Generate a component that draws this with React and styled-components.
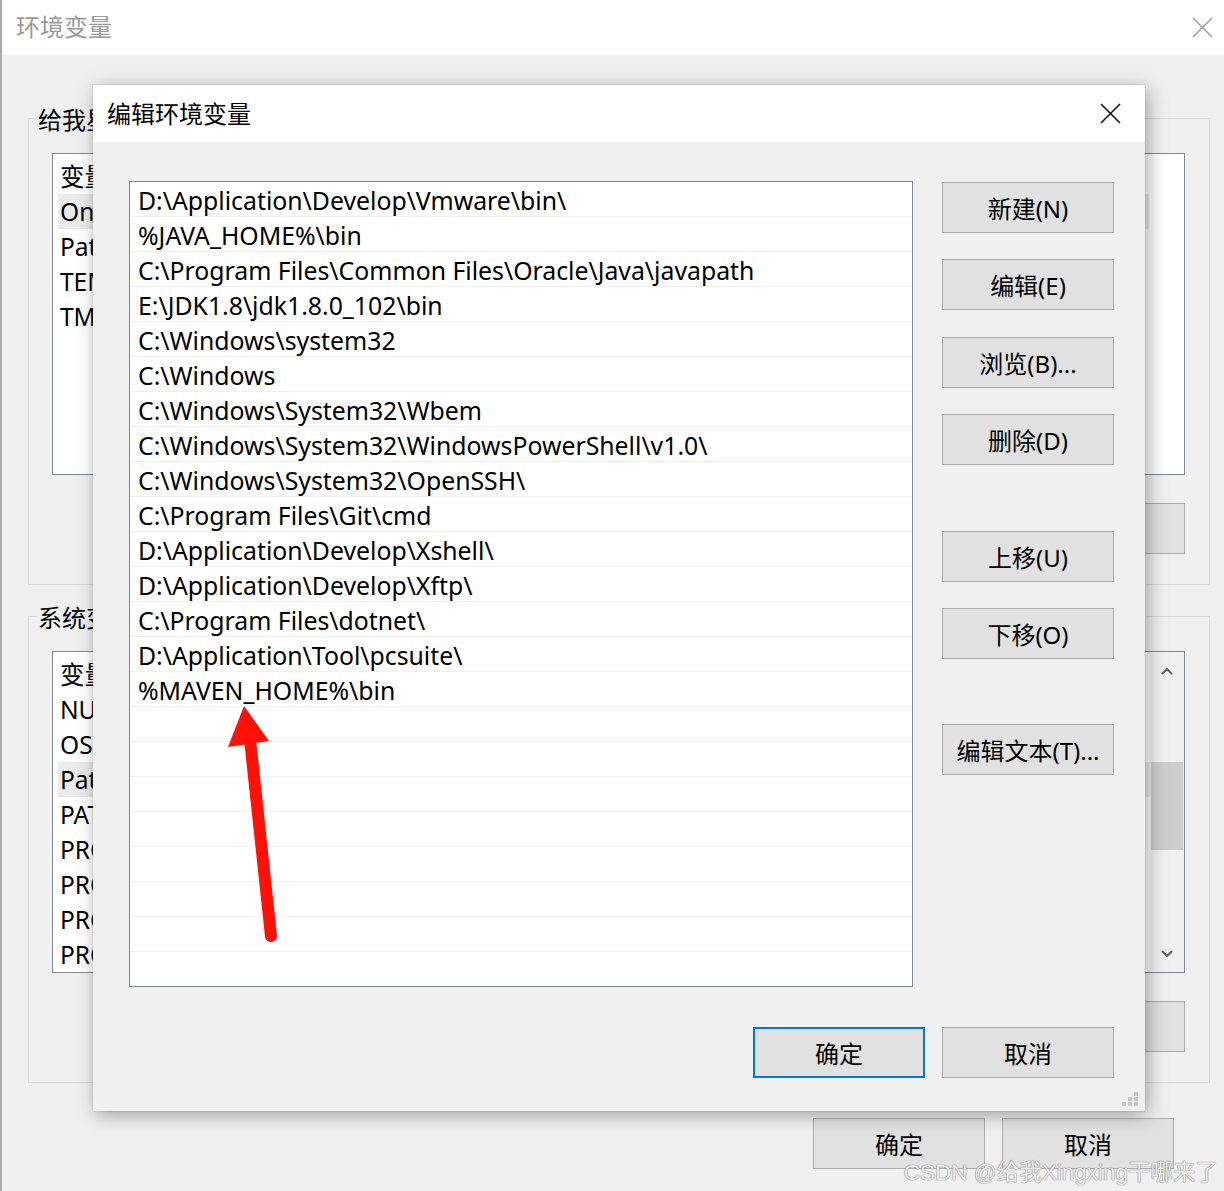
import React from 'react';
import styled, { createGlobalStyle, css } from 'styled-components';

const FONT = `"Noto Sans", "Noto Sans CJK SC", sans-serif`;

const GlobalStyle = createGlobalStyle`
  html, body { margin: 0; padding: 0; background: #f0f0f0; }
  body { font-family: ${FONT}; overflow: hidden; }
  * { box-sizing: border-box; }
`;

const Screen = styled.div`
  position: relative;
  width: 1224px;
  height: 1191px;
  overflow: hidden;
  font-family: ${FONT};
  color: #000;
`;

/* ---------- background window ---------- */
const Window = styled.div`
  width: 100%;
  height: 100%;
  background: #f0f0f0;
  border-left: 2px solid #acacac;
  display: flex;
  flex-direction: column;
`;

const TitleBar = styled.div`
  flex-shrink: 0;
  height: ${p => p.$h}px;
  background: #fff;
  display: flex;
  align-items: center;
  justify-content: space-between;
  padding: 0 ${p => p.$pr}px 0 14px;
`;

const TitleText = styled.div`
  font-size: 24px;
  line-height: 30px;
  margin-top: ${p => p.$mt || 0}px;
  color: ${p => (p.$inactive ? '#9a9a9a' : '#000')};
`;

const WinBody = styled.div`
  flex: 1;
  display: flex;
  flex-direction: column;
  padding: 63px 14px 0 26px;
`;

const Group = styled.div`
  border: 1px solid #dcdcdc;
  padding: 0 24px 30px 23px;
  margin-top: ${p => p.$mt || 0}px;
  display: flex;
  flex-direction: column;
`;

const Legend = styled.div`
  align-self: flex-start;
  margin: -13px 0 0 -15px;
  padding: 0 1px;
  height: 28px;
  line-height: 28px;
  font-size: 24px;
  background: #f0f0f0;
  white-space: nowrap;
`;

const VarList = styled.div`
  margin-top: 19px;
  height: 322px;
  background: #fff;
  border: 1px solid #828790;
  display: flex;
  overflow: hidden;
`;

const VarItems = styled.div`
  flex: 1;
  padding: 5px ${p => p.$pr || 0}px 0 5px;
`;

const VarRow = styled.div`
  height: 35px;
  line-height: 35px;
  padding-left: 2px;
  font-size: 24.5px;
  white-space: nowrap;
  background: ${p => (p.$sel ? '#ebebeb' : 'transparent')};
`;

const ScrollBar = styled.div`
  width: 34px;
  background: #f0f0f0;
  display: flex;
  flex-direction: column;
  align-items: center;
`;

const ScrollArrow = styled.div`
  height: 38px;
  width: 100%;
  display: flex;
  align-items: center;
  justify-content: center;
`;

const ScrollTrack = styled.div`
  flex: 1;
  width: 100%;
  padding: 72px 1px 0 1px;
`;

const Thumb = styled.div`
  height: 88px;
  background: #cdcdcd;
`;

const Btn = styled.button`
  width: 172px;
  height: 51px;
  flex-shrink: 0;
  background: #e1e1e1;
  border: 1px solid #adadad;
  font-family: ${FONT};
  font-size: 24px;
  color: #000;
  padding: 0;
  margin-top: ${p => p.$mt || 0}px;
  ${p =>
    p.$primary &&
    css`
      border: 2px solid #0078d7;
    `}
`;

const GroupButtonRow = styled.div`
  margin-top: 28px;
  display: flex;
  justify-content: flex-end;
`;

const BottomRow = styled.div`
  margin-top: ${p => p.$mt}px;
  padding-right: ${p => p.$pr}px;
  display: flex;
  justify-content: flex-end;
  gap: 17px;
`;

/* ---------- dialog ---------- */
const Dialog = styled.div`
  position: absolute;
  left: 93px;
  top: 85px;
  width: 1052px;
  height: 1026px;
  background: #f0f0f0;
  box-shadow: 0 0 1px rgba(0, 0, 0, 0.35), 3px 4px 18px rgba(0, 0, 0, 0.34);
  display: flex;
  flex-direction: column;
`;

const DialogBody = styled.div`
  flex: 1;
  display: flex;
  flex-direction: column;
  padding: 39px 31px 0 36px;
`;

const TopArea = styled.div`
  display: flex;
  gap: 29px;
`;

const PathList = styled.div`
  width: 784px;
  height: 806px;
  background: #fff;
  border: 1px solid #828790;
  overflow: hidden;
`;

const PathRow = styled.div`
  height: 35px;
  line-height: 36px;
  padding-left: 8px;
  border-bottom: 1px solid #f0f0f0;
  font-size: 24.8px;
  white-space: pre;
`;

const ButtonColumn = styled.div`
  display: flex;
  flex-direction: column;
  padding-top: 1px;
`;

const Grip = styled.svg`
  position: absolute;
  right: 6px;
  bottom: 4px;
`;

const Arrow = styled.svg`
  position: absolute;
  left: 220px;
  top: 700px;
  overflow: visible;
`;

const Watermark = styled.div`
  position: absolute;
  right: 6px;
  bottom: 5px;
  font-family: "Liberation Sans", "Noto Sans CJK SC", sans-serif;
  font-size: 22.5px;
  color: rgba(255, 255, 255, 0.9);
  text-shadow: 0 0 1px #777, 0 0 1px #777;
  white-space: nowrap;
`;

const CloseX = ({ color }) => (
  <svg width="21" height="21" viewBox="0 0 21 21">
    <path d="M1 1 L20 20 M20 1 L1 20" stroke={color} strokeWidth="1.6" fill="none" />
  </svg>
);

const Chevron = ({ up }) => (
  <svg width="12" height="7" viewBox="0 0 12 7">
    <path
      d={up ? 'M1 6 L6 1 L11 6' : 'M1 1 L6 6 L11 1'}
      stroke="#606060"
      strokeWidth="2"
      fill="none"
    />
  </svg>
);

const BS = '\\';
const p = s => s.split('/').join(BS);

const PATHS = [
  p('D:/Application/Develop/Vmware/bin/'),
  p('%JAVA_HOME%/bin'),
  p('C:/Program Files/Common Files/Oracle/Java/javapath'),
  p('E:/JDK1.8/jdk1.8.0_102/bin'),
  p('C:/Windows/system32'),
  p('C:/Windows'),
  p('C:/Windows/System32/Wbem'),
  p('C:/Windows/System32/WindowsPowerShell/v1.0/'),
  p('C:/Windows/System32/OpenSSH/'),
  p('C:/Program Files/Git/cmd'),
  p('D:/Application/Develop/Xshell/'),
  p('D:/Application/Develop/Xftp/'),
  p('C:/Program Files/dotnet/'),
  p('D:/Application/Tool/pcsuite/'),
  p('%MAVEN_HOME%/bin'),
];

const ROWS = [...PATHS, ...Array(8).fill('')];

const USER_VARS = ['变量', 'OneDrive', 'Path', 'TEMP', 'TMP'];
const SYS_VARS = [
  '变量',
  'NUMBER_OF_PROCESSORS',
  'OS',
  'Path',
  'PATHEXT',
  'PROCESSOR_ARCHITECTURE',
  'PROCESSOR_IDENTIFIER',
  'PROCESSOR_LEVEL',
  'PROCESSOR_REVISION',
];

const SIDE_BUTTONS = [
  { label: '新建(N)', mt: 0 },
  { label: '编辑(E)', mt: 26 },
  { label: '浏览(B)...', mt: 27 },
  { label: '删除(D)', mt: 26 },
  { label: '上移(U)', mt: 66 },
  { label: '下移(O)', mt: 26 },
  { label: '编辑文本(T)...', mt: 65 },
];

export default function App() {
  return (
    <Screen>
      <GlobalStyle />
      <Window>
        <TitleBar $h={55} $pr={11}>
          <TitleText $inactive $mt={-2}>环境变量</TitleText>
          <CloseX color="#a0a0a0" />
        </TitleBar>
        <WinBody>
          <Group>
            <Legend>给我星星 的用户变量(U)</Legend>
            <VarList>
              <VarItems $pr={35}>
                {USER_VARS.map((v, i) => (
                  <VarRow key={v} $sel={i === 1}>
                    {v}
                  </VarRow>
                ))}
              </VarItems>
            </VarList>
            <GroupButtonRow>
              <Btn>删除(L)</Btn>
            </GroupButtonRow>
          </Group>
          <Group $mt={31}>
            <Legend>系统变量(S)</Legend>
            <VarList>
              <VarItems>
                {SYS_VARS.map((v, i) => (
                  <VarRow key={v} $sel={i === 3}>
                    {v}
                  </VarRow>
                ))}
              </VarItems>
              <ScrollBar>
                <ScrollArrow>
                  <Chevron up />
                </ScrollArrow>
                <ScrollTrack>
                  <Thumb />
                </ScrollTrack>
                <ScrollArrow>
                  <Chevron />
                </ScrollArrow>
              </ScrollBar>
            </VarList>
            <GroupButtonRow>
              <Btn>删除(L)</Btn>
            </GroupButtonRow>
          </Group>
          <BottomRow $mt={35} $pr={36}>
            <Btn>确定</Btn>
            <Btn>取消</Btn>
          </BottomRow>
        </WinBody>
      </Window>

      <Dialog>
        <TitleBar $h={57} $pr={24}>
          <TitleText>编辑环境变量</TitleText>
          <CloseX color="#111" />
        </TitleBar>
        <DialogBody>
          <TopArea>
            <PathList>
              {ROWS.map((r, i) => (
                <PathRow key={i}>{r}</PathRow>
              ))}
            </PathList>
            <ButtonColumn>
              {SIDE_BUTTONS.map(b => (
                <Btn key={b.label} $mt={b.mt}>
                  {b.label}
                </Btn>
              ))}
            </ButtonColumn>
          </TopArea>
          <BottomRow $mt={40} $pr={0}>
            <Btn $primary>确定</Btn>
            <Btn>取消</Btn>
          </BottomRow>
        </DialogBody>
        <Grip width="18" height="16" viewBox="0 0 18 16">
          <g fill="#c6c6c6">
            <rect x="13" y="1" width="4" height="4" />
            <rect x="7" y="6" width="4" height="4" />
            <rect x="13" y="6" width="4" height="4" />
            <rect x="1" y="11" width="4" height="4" />
            <rect x="7" y="11" width="4" height="4" />
            <rect x="13" y="11" width="4" height="4" />
          </g>
        </Grip>
      </Dialog>

      <Arrow width="60" height="250" viewBox="0 0 60 250">
        <line x1="29" y1="30" x2="51" y2="236" stroke="#fe1208" strokeWidth="12" strokeLinecap="round" />
        <polygon points="24,6 8,47 49,41" fill="#fe1208" />
      </Arrow>

      <Watermark>CSDN @给我Xingxing干哪来了</Watermark>
    </Screen>
  );
}
